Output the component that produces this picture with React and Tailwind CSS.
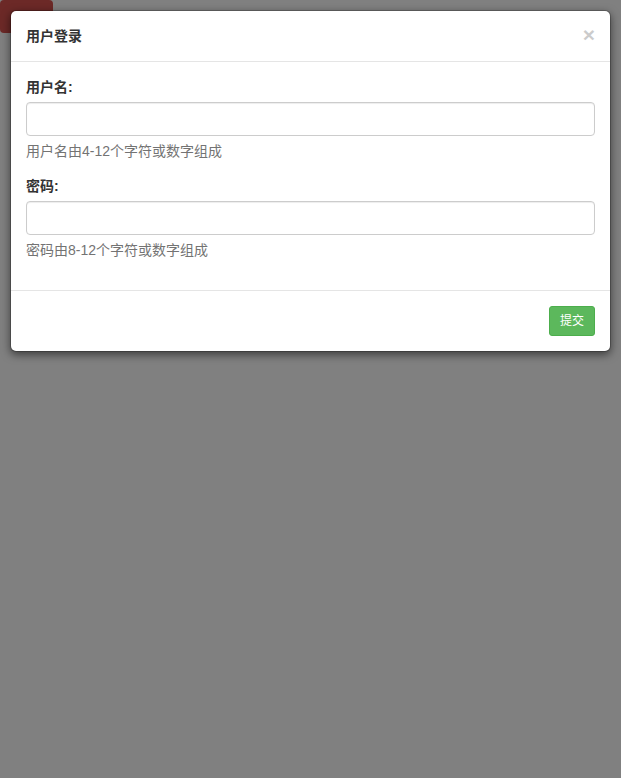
export default function App() {
  return (
    <div
      className="relative h-[778px] w-full bg-[#808080] text-[14px] leading-[20px] text-[#333]"
      style={{ fontFamily: '"Liberation Sans", "Noto Sans CJK SC", sans-serif' }}
    >
      {/* button behind the backdrop */}
      <div className="absolute left-0 top-0 h-[33px] w-[53px] rounded-[4px] bg-[#6c2927]" />

      <div className="relative p-[10px]">
        <div className="rounded-[6px] border border-black/20 bg-white bg-clip-padding shadow-[0_3px_9px_rgba(0,0,0,0.5)]">
          {/* header */}
          <div className="flex items-start justify-between border-b border-[#e5e5e5] p-[15px]">
            <h4 className="m-0 text-[14px] font-bold leading-[20px] text-[#333]">用户登录</h4>
            <button className="-mt-[2px] text-[21px] font-bold leading-none text-black opacity-20">
              ×
            </button>
          </div>

          {/* body */}
          <div className="p-[15px]">
            <div className="mb-[15px]">
              <label className="mb-[5px] block font-bold">用户名:</label>
              <input
                type="text"
                className="block h-[34px] w-full rounded-[4px] border border-[#ccc] px-3 shadow-[inset_0_1px_1px_rgba(0,0,0,0.075)] outline-none"
              />
              <p className="mt-[5px] text-[#737373]">用户名由4-12个字符或数字组成</p>
            </div>
            <div className="mb-[15px]">
              <label className="mb-[5px] block font-bold">密码:</label>
              <input
                type="password"
                className="block h-[34px] w-full rounded-[4px] border border-[#ccc] px-3 shadow-[inset_0_1px_1px_rgba(0,0,0,0.075)] outline-none"
              />
              <p className="mt-[5px] text-[#737373]">密码由8-12个字符或数字组成</p>
            </div>
          </div>

          {/* footer */}
          <div className="flex justify-end border-t border-[#e5e5e5] p-[15px]">
            <button className="h-[30px] rounded-[3px] border border-[#4cae4c] bg-[#5cb85c] px-[10px] text-[12px] leading-[18px] text-white">
              提交
            </button>
          </div>
        </div>
      </div>
    </div>
  );
}
